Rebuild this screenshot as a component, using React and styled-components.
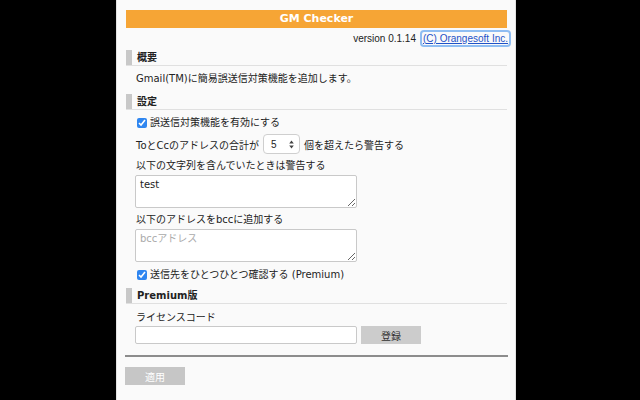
import styled, { createGlobalStyle } from 'styled-components';

const GlobalStyle = createGlobalStyle`
  html, body {
    margin: 0;
    padding: 0;
    background: #000;
  }
  body {
    font-family: "DejaVu Sans", "Noto Sans CJK JP", sans-serif;
    font-size: 10px;
    color: #222;
  }
`;

const Page = styled.div`
  display: flex;
  justify-content: center;
  padding-right: 8px;
  height: 400px;
  overflow: hidden;
`;

const Panel = styled.div`
  width: 400px;
  box-sizing: border-box;
  height: 400px;
  background: #fafafa;
  border-left: 1px solid #e2e2e2;
  border-right: 1px solid #e2e2e2;
  padding: 10px 8px 0 9px;
`;

const TitleBar = styled.div`
  height: 18px;
  background: #f6a535;
  color: #fff;
  font-weight: bold;
  font-size: 11px;
  line-height: 18px;
  text-align: center;
`;

const VersionRow = styled.div`
  height: 20px;
  display: flex;
  justify-content: flex-end;
  align-items: center;
  gap: 6px;
  font-family: "Liberation Sans", Arial, sans-serif;
  font-size: 10px;
  margin-right: -2px;
`;

const CopyLink = styled.a`
  color: #1f52c7;
  text-decoration: underline;
  padding: 1px 1px;
  border-radius: 2px;
  box-shadow: 0 0 0 2px #8fbdf2;
`;

const SectionHeader = styled.div`
  height: 15px;
  margin-top: ${p => p.$top || 0}px;
  display: flex;
  align-items: center;
  border-bottom: 1px solid #e0e0e0;
  font-weight: bold;
  font-size: 10px;
  line-height: 15px;

  &::before {
    content: '';
    width: 6px;
    align-self: stretch;
    background: #c8c8c8;
    margin-right: 5px;
  }
`;

const Section = styled.div`
  padding-left: 10px;
`;

const Text = styled.div`
  line-height: 14px;
  height: 14px;
  white-space: nowrap;
  margin-top: ${p => p.$top || 0}px;
`;

const CheckRow = styled.label`
  display: flex;
  align-items: center;
  gap: 3px;
  height: 14px;
  line-height: 14px;
  margin-top: ${p => p.$top || 0}px;
  padding-left: 1px;
`;

const Check = styled.input`
  width: 10px;
  height: 10px;
  margin: 0;
  accent-color: #2f86f0;
`;

const LimitRow = styled.div`
  display: flex;
  align-items: center;
  gap: 4px;
  height: 20px;
  margin-top: 4px;
  white-space: nowrap;
`;

const SelectBox = styled.div`
  width: 37px;
  height: 20px;
  box-sizing: border-box;
  border: 1px solid #cfcfcf;
  border-radius: 4px;
  background: #fff;
  display: flex;
  align-items: center;
  justify-content: space-between;
  padding: 0 5px 0 7px;
  font-family: "Liberation Sans", Arial, sans-serif;
  font-size: 10px;
`;

const TextArea = styled.textarea`
  display: block;
  width: 222px;
  height: 33px;
  box-sizing: border-box;
  margin: 2px 0 0 -1px;
  border: 1px solid #c9c9c9;
  border-radius: 2px;
  background: #fff;
  padding: 3px 4px;
  font-family: "DejaVu Sans", "Noto Sans CJK JP", sans-serif;
  font-size: 10px;
  line-height: 12px;
  color: #222;
  outline: none;

  &::placeholder {
    color: #aaa;
  }
`;

const LicenseRow = styled.div`
  display: flex;
  gap: 4px;
  margin: 1px 0 0 -1px;
`;

const LicenseInput = styled.input`
  width: 222px;
  height: 18px;
  box-sizing: border-box;
  border: 1px solid #c9c9c9;
  border-radius: 2px;
  background: #fff;
  margin: 0;
  outline: none;
`;

const GreyButton = styled.button`
  width: 60px;
  height: 18px;
  border: none;
  border-radius: 0;
  margin: 0;
  padding: 0;
  background: ${p => (p.$light ? '#c6c6c6' : '#cccccc')};
  color: ${p => (p.$light ? '#fff' : '#333')};
  font-family: "Noto Sans CJK JP", sans-serif;
  font-size: 10px;
`;

const Separator = styled.hr`
  margin: 11px -1px 0 -1px;
  border: none;
  border-top: 2px solid #8c8c8c;
  height: 0;
`;

const Footer = styled.div`
  margin: 10px 0 0 -1px;
`;

const SpinArrows = () => (
  <svg width="5" height="9" viewBox="0 0 5 9">
    <path d="M2.5 0.5 L4.8 3.6 H0.2 Z M2.5 8.5 L4.8 5.4 H0.2 Z" fill="#444" />
  </svg>
);

const App = () => {
  return (
    <Page>
      <GlobalStyle />
      <Panel>
        <TitleBar>GM Checker</TitleBar>
        <VersionRow>
          <span>version 0.1.14</span>
          <CopyLink href="#">(C) Orangesoft Inc.</CopyLink>
        </VersionRow>

        <SectionHeader $top={2}>概要</SectionHeader>
        <Section>
          <Text $top={6}>Gmail(TM)に簡易誤送信対策機能を追加します。</Text>
        </Section>

        <SectionHeader $top={8}>設定</SectionHeader>
        <Section>
          <CheckRow $top={6}>
            <Check type="checkbox" defaultChecked />
            誤送信対策機能を有効にする
          </CheckRow>
          <LimitRow>
            <span>ToとCcのアドレスの合計が</span>
            <SelectBox>
              <span>5</span>
              <SpinArrows />
            </SelectBox>
            <span>個を超えたら警告する</span>
          </LimitRow>
          <Text $top={5}>以下の文字列を含んでいたときは警告する</Text>
          <TextArea defaultValue="test" />
          <Text $top={5}>以下のアドレスをbccに追加する</Text>
          <TextArea placeholder="bccアドレス" />
          <CheckRow $top={6}>
            <Check type="checkbox" defaultChecked />
            送信先をひとつひとつ確認する (Premium)
          </CheckRow>
        </Section>

        <SectionHeader $top={6}>Premium版</SectionHeader>
        <Section>
          <Text $top={7}>ライセンスコード</Text>
          <LicenseRow>
            <LicenseInput type="text" />
            <GreyButton>登録</GreyButton>
          </LicenseRow>
        </Section>

        <Separator />
        <Footer>
          <GreyButton $light>適用</GreyButton>
        </Footer>
      </Panel>
    </Page>
  );
};

export default App;
